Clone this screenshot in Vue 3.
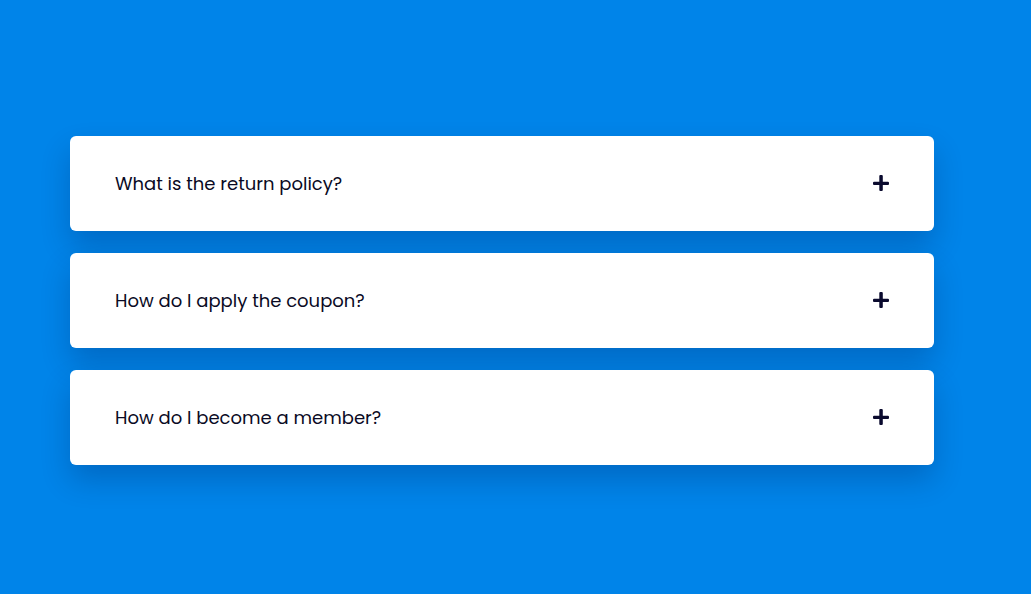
<script setup>
import { ref } from 'vue'

const items = [
  { id: 'return', question: 'What is the return policy?', answer: 'Items can be returned within 30 days.' },
  { id: 'coupon', question: 'How do I apply the coupon?', answer: 'Enter the code at checkout.' },
  { id: 'member', question: 'How do I become a member?', answer: 'Create an account to join.' }
]
const open = ref(null)
const toggle = (id) => {
  open.value = open.value === id ? null : id
}
</script>

<template>
  <main class="page">
    <section class="accordion">
      <article v-for="item in items" :key="item.id" class="card">
        <button class="question" type="button" :aria-expanded="open === item.id" @click="toggle(item.id)">
          <span>{{ item.question }}</span>
          <svg class="icon" viewBox="0 0 16 18" aria-hidden="true">
            <rect x="0" y="7.7" width="16" height="3.3" rx="1.1" />
            <rect x="6.3" y="1" width="3.5" height="16" rx="1.1" />
          </svg>
        </button>
        <p v-if="open === item.id" class="answer">{{ item.answer }}</p>
      </article>
    </section>
  </main>
</template>

<style>
body {
  margin: 0;
  background: #0084e9;
}
</style>

<style scoped>
.page {
  box-sizing: border-box;
  min-height: 100vh;
  padding: 6px 97px 0 70px;
  display: flex;
  align-items: center;
  font-family: Poppins, Inter, "Open Sans", sans-serif;
}
.accordion {
  flex: 1;
  display: flex;
  flex-direction: column;
  gap: 22px;
}
.card {
  background: #fff;
  border-radius: 6px;
  box-shadow: 0 15px 30px rgba(0, 0, 50, 0.2);
}
.question {
  box-sizing: border-box;
  width: 100%;
  padding: 34px 45px;
  display: flex;
  align-items: center;
  justify-content: space-between;
  border: 0;
  background: transparent;
  color: #0a0a24;
  font-family: inherit;
  font-size: 18px;
  line-height: 27px;
  text-align: left;
  cursor: pointer;
}
.icon {
  width: 16px;
  height: 18px;
  fill: #0a0a2e;
}
.answer {
  margin: 0;
  padding: 0 45px 34px;
  color: #555770;
  font-size: 14px;
  line-height: 24px;
}
</style>
